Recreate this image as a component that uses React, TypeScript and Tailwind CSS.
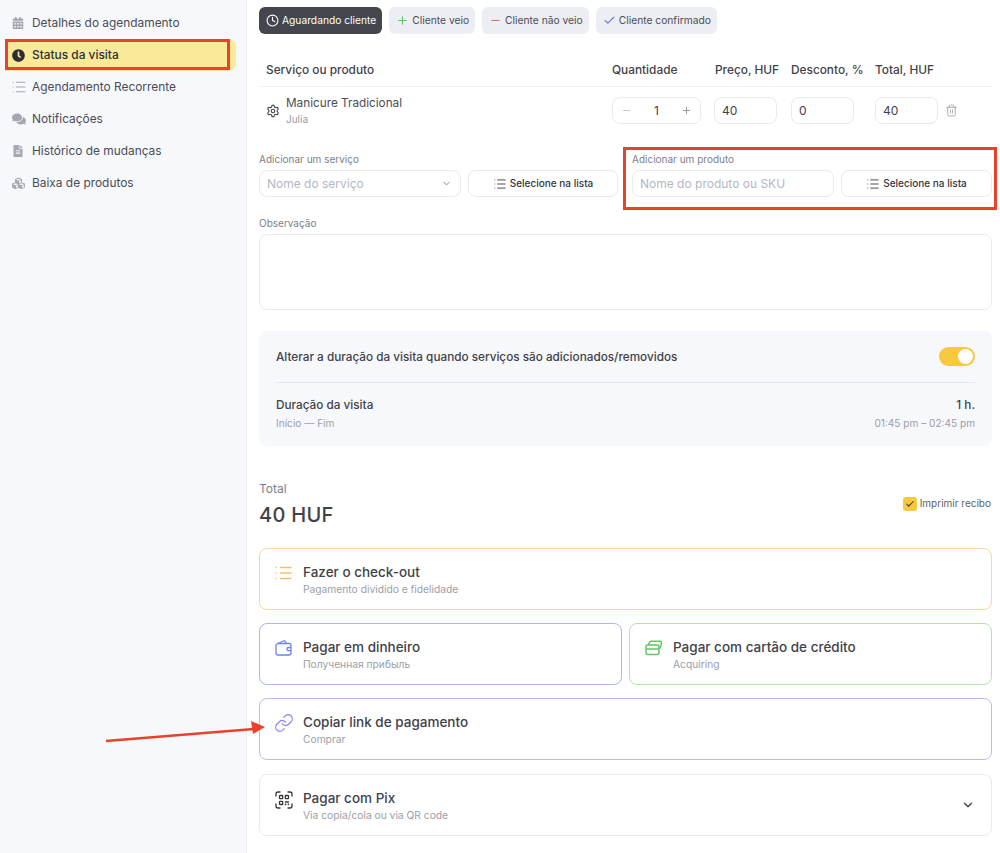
import { Check, ChevronDown, Clock, Link as LinkIcon, List, Minus, Plus, Settings, Trash2 } from 'lucide-react';
import { FaCalendarAlt, FaClock, FaComments, FaCubes, FaFileAlt } from 'react-icons/fa';
import type { ReactNode } from 'react';

const NAV = [
  { label: 'Detalhes do agendamento', icon: <FaCalendarAlt size={12} /> },
  { label: 'Status da visita', icon: <FaClock size={13} />, active: true },
  { label: 'Agendamento Recorrente', icon: <List size={16} strokeWidth={1.6} className="-ml-[1px]" /> },
  { label: 'Notificações', icon: <FaComments size={14} /> },
  { label: 'Histórico de mudanças', icon: <FaFileAlt size={12} /> },
  { label: 'Baixa de produtos', icon: <FaCubes size={13} /> },
];

function Sidebar() {
  return (
    <aside className="w-[247px] shrink-0 border-r border-[#eceef3] bg-[#f7f8fc] pt-[7px] pl-[5px] pr-[10px]">
      {NAV.map((item) => (
        <div
          key={item.label}
          className={`flex h-8 items-center rounded-r-lg pl-[7px] text-[11.9px] ${
            item.active ? 'bg-[#fbe99a] font-medium text-[#2c2f36]' : 'text-[#4a4d55]'
          }`}
        >
          <span className={`flex w-[20px] justify-start ${item.active ? 'text-[#2c2f36]' : 'text-[#a4a7b0]'}`}>
            {item.icon}
          </span>
          {item.label}
        </div>
      ))}
    </aside>
  );
}

function StatusButton({ icon, label, active }: { icon: ReactNode; label: string; active?: boolean }) {
  return (
    <button
      className={`flex h-[27px] items-center gap-[3px] rounded-md pl-[7px] pr-[6px] text-[10.25px] ${
        active ? 'bg-[#43464d] text-white' : 'bg-[#eceef4] text-[#4a4d55]'
      }`}
    >
      {icon}
      {label}
    </button>
  );
}

function Field({ value, className = '' }: { value: string; className?: string }) {
  return (
    <div className={`flex h-[27px] items-center rounded-lg border border-[#e8eaf0] px-[7px] text-[12px] text-[#3f4249] ${className}`}>
      {value}
    </div>
  );
}

function ListButton({ className = '' }: { className?: string }) {
  return (
    <button className={`flex h-[27px] items-center justify-center gap-[3px] rounded-lg border border-[#e8eaf0] text-[10px] font-medium text-[#33363d] ${className}`}>
      <List size={14} strokeWidth={1.5} />
      Selecione na lista
    </button>
  );
}

function ActionCard({
  icon,
  title,
  sub,
  border,
  className = '',
  right,
}: {
  icon: ReactNode;
  title: string;
  sub: string;
  border: string;
  className?: string;
  right?: ReactNode;
}) {
  return (
    <div className={`flex h-[62px] items-center rounded-lg border pl-[15px] pr-4 ${border} ${className}`}>
      <span className="-mt-[13px] flex w-[28px] shrink-0">{icon}</span>
      <div className="flex-1">
        <div className="text-[13.5px] leading-[18px] font-medium text-[#3f4249]">{title}</div>
        <div className="mt-[1px] text-[10.25px] leading-[14px] text-[#9b9ea8]">{sub}</div>
      </div>
      {right}
    </div>
  );
}

function WalletIcon() {
  return (
    <svg width="17" height="17" viewBox="0 0 17 17" fill="none" stroke="#6b84ee" strokeWidth="1.3" strokeLinejoin="round">
      <path d="M1 5.5v8.5a2 2 0 0 0 2 2h11a2 2 0 0 0 2-2V6a1.5 1.5 0 0 0-1.5-1.5H2.5" />
      <path d="M1 5.5 9.5 1.5l2 3" />
      <path d="M16 8.5h-2.5a1.6 1.6 0 0 0 0 3.2H16" />
    </svg>
  );
}

function CardsIcon() {
  return (
    <svg width="18" height="17" viewBox="0 0 18 17" fill="none" stroke="#62c564" strokeWidth="1.5" strokeLinejoin="round">
      <rect x="1" y="6" width="13" height="9.5" rx="2" />
      <path d="M1 10h13" />
      <path d="M3.5 6 4.5 3.2a1.5 1.5 0 0 1 1.4-1H15a1.5 1.5 0 0 1 1.5 1.9L15 9.5" />
    </svg>
  );
}

function PixIcon() {
  return (
    <svg width="18" height="18" viewBox="0 0 18 18" fill="none" stroke="#33363d" strokeWidth="1.3" strokeLinecap="round" className="translate-y-[1px]">
      <path d="M1 5V3a2 2 0 0 1 2-2h2M13 1h2a2 2 0 0 1 2 2v2M1 13v2a2 2 0 0 0 2 2h2M13 17h2a2 2 0 0 0 2-2v-2" />
      <rect x="4.5" y="4.5" width="3.2" height="3.2" rx="0.6" />
      <rect x="10.3" y="4.5" width="3.2" height="3.2" rx="0.6" />
      <rect x="4.5" y="10.3" width="3.2" height="3.2" rx="0.6" />
      <path d="M10.5 11h2.8M13.3 13.4h.1M10.5 13.4h.1" strokeWidth="1.6" />
    </svg>
  );
}

function ChecklistIcon() {
  return (
    <svg width="17" height="14" viewBox="0 0 17 14" fill="none" stroke="#f7bd6e" strokeWidth="1.4" strokeLinecap="round">
      <path d="M1 1.5h.1M1 7h.1M1 12.5h.1M5.5 1.5H16M5.5 7H16M5.5 12.5H16" />
    </svg>
  );
}

export default function App() {
  return (
    <div className="relative flex h-[853px] overflow-hidden bg-white font-['Inter',sans-serif]">
      <Sidebar />

      <main className="flex-1 pl-3 pr-2 pt-[7px]">
        <div className="flex gap-[7px]">
          <StatusButton active icon={<Clock size={13} />} label="Aguardando cliente" />
          <StatusButton icon={<Plus size={13} className="text-[#62c564]" />} label="Cliente veio" />
          <StatusButton icon={<Minus size={13} className="text-[#ee6a6a]" />} label="Cliente não veio" />
          <StatusButton icon={<Check size={13} className="text-[#6b6fe8]" />} label="Cliente confirmado" />
        </div>

        {/* Table */}
        <div className="mt-[18px] grid h-[35px] grid-cols-[346px_103px_76px_84px_1fr] items-center border-b border-[#f0f1f5] pl-[7px] pt-[3px] text-[11.85px] font-medium text-[#3f4249]">
          <span>Serviço ou produto</span>
          <span>Quantidade</span>
          <span>Preço, HUF</span>
          <span>Desconto, %</span>
          <span>Total, HUF</span>
        </div>
        <div className="mt-[10px] grid h-[27px] grid-cols-[346px_102px_77px_84px_1fr] grid-rows-[27px] items-center pl-[7px]">
          <div className="flex items-center">
            <Settings size={14} className="mr-[6px] text-[#4a4d55]" />
            <div>
              <div className="text-[11.75px] leading-4 text-[#4a4d55]">Manicure Tradicional</div>
              <div className="mt-[1px] text-[10px] leading-[14px] text-[#9b9ea8]">Julia</div>
            </div>
          </div>
          <div className="flex h-[27px] w-[89px] items-center justify-between rounded-lg border border-[#e8eaf0] px-2 text-[12px] text-[#3f4249]">
            <Minus size={11} className="text-[#c5c7cf]" />
            1
            <Plus size={11} className="text-[#8d9099]" />
          </div>
          <Field value="40" className="w-[63px]" />
          <Field value="0" className="w-[63px]" />
          <div className="flex items-center gap-[7px]">
            <Field value="40" className="w-[63px]" />
            <Trash2 size={13} strokeWidth={1.5} className="text-[#9b9ea8]" />
          </div>
        </div>

        {/* Add service / product */}
        <div className="mt-[28px] flex">
          <div className="w-[359px]">
            <div className="text-[10px] leading-[14px] text-[#7d8089]">Adicionar um serviço</div>
            <div className="mt-[4px] flex gap-[7px]">
              <div className="flex h-[27px] w-[202px] items-center justify-between rounded-lg border border-[#e8eaf0] pl-[7px] pr-2 text-[12px] text-[#b3b7c4]">
                Nome do serviço
                <ChevronDown size={11} className="text-[#7d8089]" />
              </div>
              <ListButton className="w-[150px]" />
            </div>
          </div>
          <div className="ml-[14px] flex-1">
            <div className="text-[10px] leading-[14px] text-[#7d8089]">Adicionar um produto</div>
            <div className="mt-[4px] flex gap-[7px]">
              <Field value="Nome do produto ou SKU" className="w-[202px] !text-[#b3b7c4]" />
              <ListButton className="w-[151px]" />
            </div>
          </div>
        </div>

        <div className="mt-[19px] text-[10px] leading-[14px] text-[#7d8089]">Observação</div>
        <div className="mt-[4px] h-[76px] rounded-lg border border-[#e8eaf0]" />

        {/* Duration */}
        <div className="mt-[21px] h-[115px] rounded-lg bg-[#f7f8fc] px-[17px]">
          <div className="flex h-[52px] items-center justify-between border-b border-[#e6e7ec]">
            <span className="pt-[2px] text-[11.75px] font-medium text-[#3f4249]">
              Alterar a duração da visita quando serviços são adicionados/removidos
            </span>
            <span className="flex h-[19px] w-9 items-center justify-end rounded-full bg-[#f8c93f] pr-[2px]">
              <span className="size-[15px] rounded-full bg-white" />
            </span>
          </div>
          <div className="mt-[14px] flex justify-between text-[11.75px] font-medium leading-4 text-[#3f4249]">
            <span>Duração da visita</span>
            <span>1 h.</span>
          </div>
          <div className="mt-[2px] flex justify-between text-[10.1px] leading-4 text-[#9b9ea8]">
            <span>Início — Fim</span>
            <span>01:45 pm – 02:45 pm</span>
          </div>
        </div>

        {/* Total */}
        <div className="mt-[35px] flex items-start justify-between">
          <div>
            <div className="text-[12px] leading-4 text-[#7d8089]">Total</div>
            <div className="mt-[5px] text-[20px] leading-[26px] font-medium tracking-[0.3px] text-[#3f4249]">40 HUF</div>
          </div>
          <label className="mt-[15px] flex items-center gap-[3px] pr-px text-[10px] text-[#5b5e66]">
            <span className="flex size-[14px] items-center justify-center rounded-[3px] bg-[#f8c93f]">
              <Check size={10} strokeWidth={2.5} className="text-[#33363d]" />
            </span>
            Imprimir recibo
          </label>
        </div>

        {/* Payment actions */}
        <div className="mt-[20px] flex flex-col gap-[13px]">
          <ActionCard
            border="border-[#fbd79c]"
            icon={<ChecklistIcon />}
            title="Fazer o check-out"
            sub="Pagamento dividido e fidelidade"
          />
          <div className="flex gap-[7px]">
            <ActionCard
              className="w-[363px]"
              border="border-[#a9b8f5]"
              icon={<WalletIcon />}
              title="Pagar em dinheiro"
              sub="Полученная прибыль"
            />
            <ActionCard
              className="flex-1"
              border="border-[#b5e3ab]"
              icon={<CardsIcon />}
              title="Pagar com cartão de crédito"
              sub="Acquiring"
            />
          </div>
          <ActionCard
            border="border-[#bdb9f8]"
            icon={<LinkIcon size={20} strokeWidth={1.5} className="-ml-[1px] text-[#8d86f0]" />}
            title="Copiar link de pagamento"
            sub="Comprar"
          />
          <ActionCard
            className="mt-px"
            border="border-[#e8eaf0]"
            icon={<PixIcon />}
            title="Pagar com Pix"
            sub="Via copia/cola ou via QR code"
            right={<ChevronDown size={14} className="text-[#33363d]" />}
          />
        </div>
      </main>

      {/* Annotations drawn over the screenshot */}
      <div className="absolute left-[5px] top-[39px] h-[31px] w-[225px] border-[3px] border-[#e8432a]" />
      <div className="absolute left-[623px] top-[147px] h-[63px] w-[374px] border-[3px] border-[#e8432a]" />
      <svg className="absolute left-0 top-0" width="1000" height="853" fill="none">
        <path d="M106 741 254 729" stroke="#e8432a" strokeWidth="2.5" />
        <path d="M251 721 265 727 253 734Z" fill="#e8432a" />
      </svg>
    </div>
  );
}
